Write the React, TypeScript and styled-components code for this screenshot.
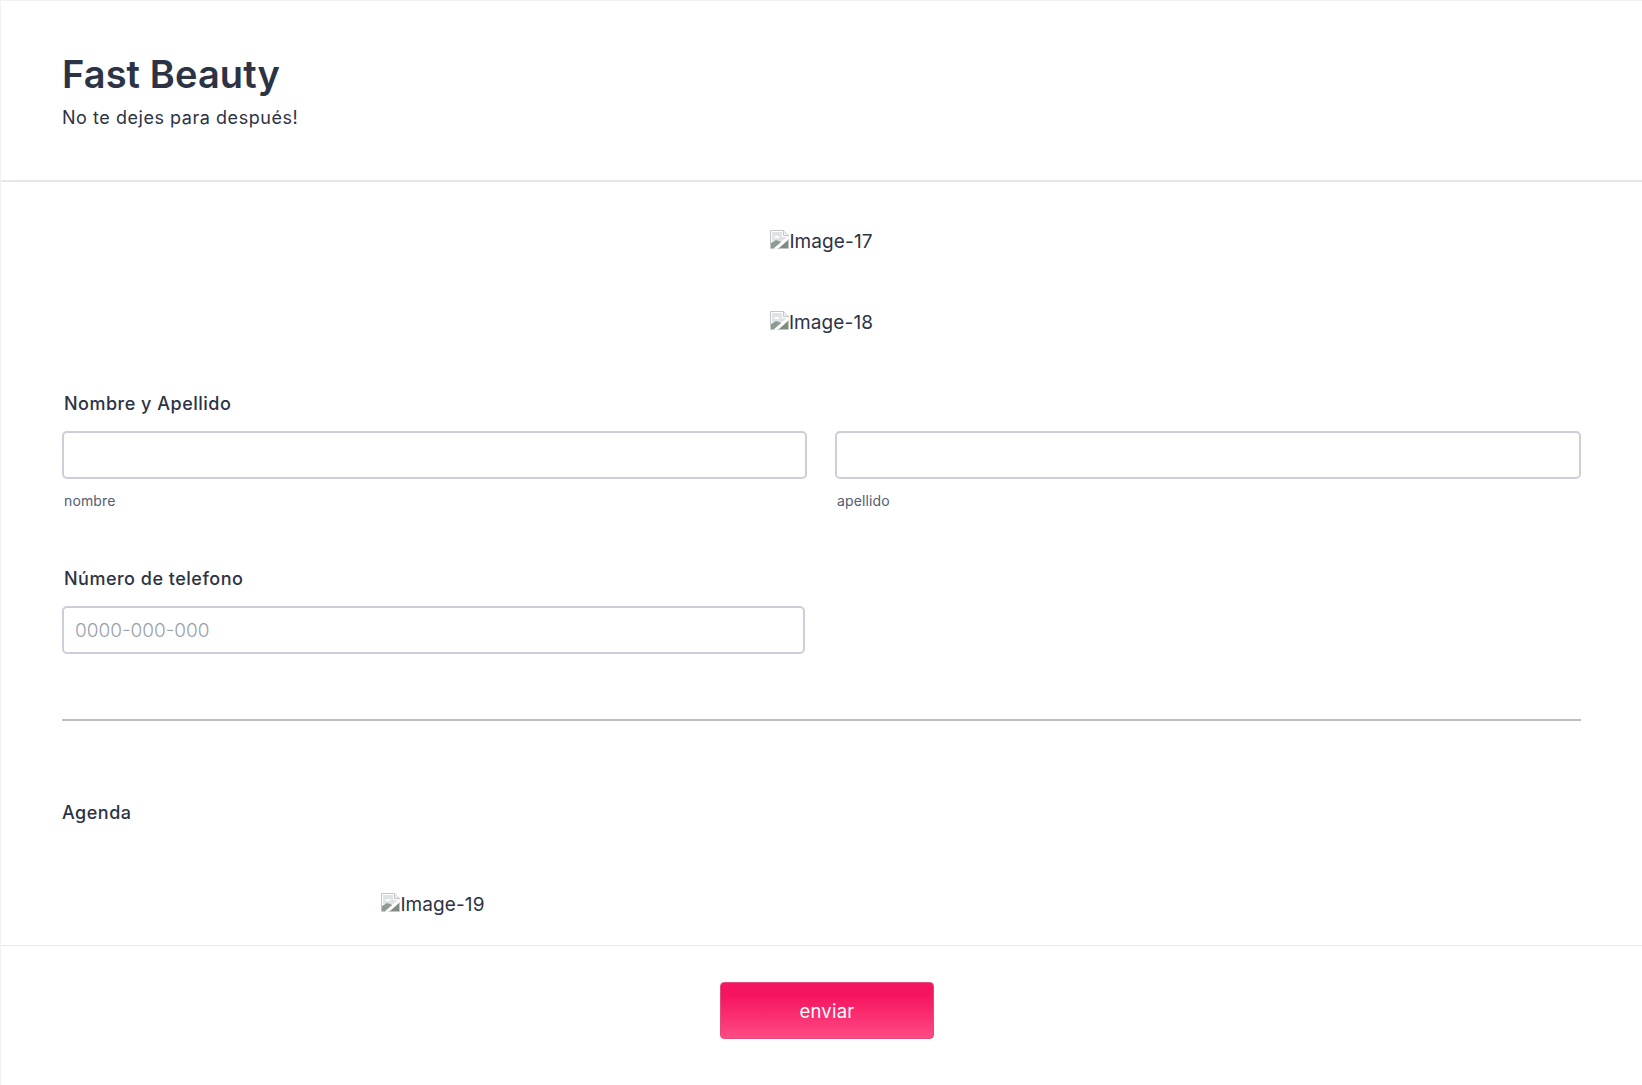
import * as React from "react";
import styled, { createGlobalStyle } from "styled-components";

const Global = createGlobalStyle`
  html, body { margin: 0; padding: 0; background: #fff; }
  body {
    font-family: Inter, "Liberation Sans", sans-serif;
    color: #2c3345;
  }
  * { box-sizing: border-box; }
`;

const Page = styled.div`
  width: 1642px;
  height: 1085px;
  overflow: hidden;
  display: flex;
  flex-direction: column;
  border-top: 1px solid #f0f1f5;
  border-left: 1px solid #f0f1f5;
`;

const Header = styled.header`
  flex: none;
  height: 181px;
  padding: 49px 61px 0;
  border-bottom: 2px solid #e6e7ec;
`;

const Title = styled.h1`
  margin: 0;
  font-size: 38px;
  line-height: 48px;
  font-weight: 570;
  letter-spacing: 0.1px;
  color: #2c3345;
`;

const Subtitle = styled.div`
  margin-top: 8px;
  font-size: 18px;
  line-height: 24px;
  letter-spacing: 0.54px;
`;

const Body = styled.main`
  flex: none;
  height: 764px;
  padding: 48px 61px 0;
  display: flex;
  flex-direction: column;
  border-bottom: 1px solid #e9eaee;
`;

const ImageRow = styled.div`
  flex: none;
  display: flex;
  justify-content: center;
  height: 81px;
`;

const HalfImageRow = styled(ImageRow)`
  width: 742px;
`;

const BrokenImage = styled.span`
  display: inline-flex;
  align-items: flex-start;
  height: 24px;
  font-size: 19px;
  line-height: 24px;
  letter-spacing: 0.1px;
  color: #2c3345;
`;

const Label = styled.label`
  display: block;
  flex: none;
  padding-left: 2px;
  font-size: 18px;
  line-height: 24px;
  font-weight: 450;
  letter-spacing: 0.5px;
`;

const Fields = styled.div`
  flex: none;
  display: grid;
  grid-template-columns: 745px 746px;
  column-gap: 28px;
  margin-top: 15px;
`;

const Field = styled.div`
  display: flex;
  flex-direction: column;
`;

const Input = styled.input<{ $width?: number }>`
  width: ${(p) => (p.$width ? `${p.$width}px` : "100%")};
  height: 48px;
  padding: 0 11px;
  border: 2px solid #cdced9;
  border-radius: 5px;
  background: #fff;
  font-family: inherit;
  font-size: 19px;
  color: #2c3345;
  outline: none;
  &::placeholder { color: #9a9fae; font-weight: 300; opacity: 1; }
`;

const SubLabel = styled.div`
  margin-top: 13px;
  padding-left: 2px;
  font-size: 14px;
  line-height: 18px;
  letter-spacing: 0.12px;
  color: #525d72;
`;

const PhoneBlock = styled.div`
  flex: none;
  margin-top: 57px;
`;

const PhoneInput = styled(Input)`
  margin-top: 15px;
`;

const Rule = styled.hr`
  flex: none;
  width: 100%;
  height: 2px;
  margin: 65px 0 0;
  border: 0;
  background: #bcbdc2;
`;

const SectionTitle = styled.div`
  flex: none;
  margin-top: 80px;
  font-size: 18px;
  line-height: 24px;
  font-weight: 450;
  letter-spacing: 0.5px;
`;

const AgendaImage = styled(HalfImageRow)`
  margin-top: 68px;
`;

const Footer = styled.footer`
  display: flex;
  justify-content: center;
  padding: 36px 0 0 11px;
`;

const Submit = styled.button`
  width: 214px;
  height: 57px;
  border: 1px solid #e24a7d;
  border-radius: 4px;
  background: linear-gradient(180deg, #f5145f 0%, #f5145f 22%, #ff4a85 100%);
  font-family: inherit;
  font-size: 18.5px;
  letter-spacing: 0.25px;
  color: #fff;
`;

function BrokenIcon() {
  return (
    <svg width="19" height="19" viewBox="0 0 19 19" aria-hidden="true">
      <path d="M.5.5h13l5 5v13H.5z" fill="#fff" stroke="#c3c5ca" />
      <path d="M13.5.5v5h5" fill="#eceef1" stroke="#c3c5ca" />
      <path d="M2 2h10v5h5v4H2z" fill="#dfe2e6" />
      <path d="M4 8c1-3 4-3 6 0z" fill="#fff" />
      <path d="M1 18v-5l5-3 6 2-7 6z" fill="#8e9b90" />
      <path d="M9 18l9-8v8z" fill="#7c8c80" />
      <path d="M5 19 19 7" stroke="#fff" strokeWidth="2.5" />
    </svg>
  );
}

function ImageAlt({ text }: { text: string }) {
  return (
    <BrokenImage>
      <BrokenIcon />
      {text}
    </BrokenImage>
  );
}

export default function App() {
  return (
    <Page>
      <Global />
      <Header>
        <Title>Fast Beauty</Title>
        <Subtitle>No te dejes para después!</Subtitle>
      </Header>
      <Body>
        <ImageRow><ImageAlt text="Image-17" /></ImageRow>
        <ImageRow><ImageAlt text="Image-18" /></ImageRow>
        <Label>Nombre y Apellido</Label>
        <Fields>
          <Field>
            <Input />
            <SubLabel>nombre</SubLabel>
          </Field>
          <Field>
            <Input />
            <SubLabel>apellido</SubLabel>
          </Field>
        </Fields>
        <PhoneBlock>
          <Label>Número de telefono</Label>
          <PhoneInput $width={743} placeholder="0000-000-000" />
        </PhoneBlock>
        <Rule />
        <SectionTitle>Agenda</SectionTitle>
        <AgendaImage><ImageAlt text="Image-19" /></AgendaImage>
      </Body>
      <Footer>
        <Submit>enviar</Submit>
      </Footer>
    </Page>
  );
}
